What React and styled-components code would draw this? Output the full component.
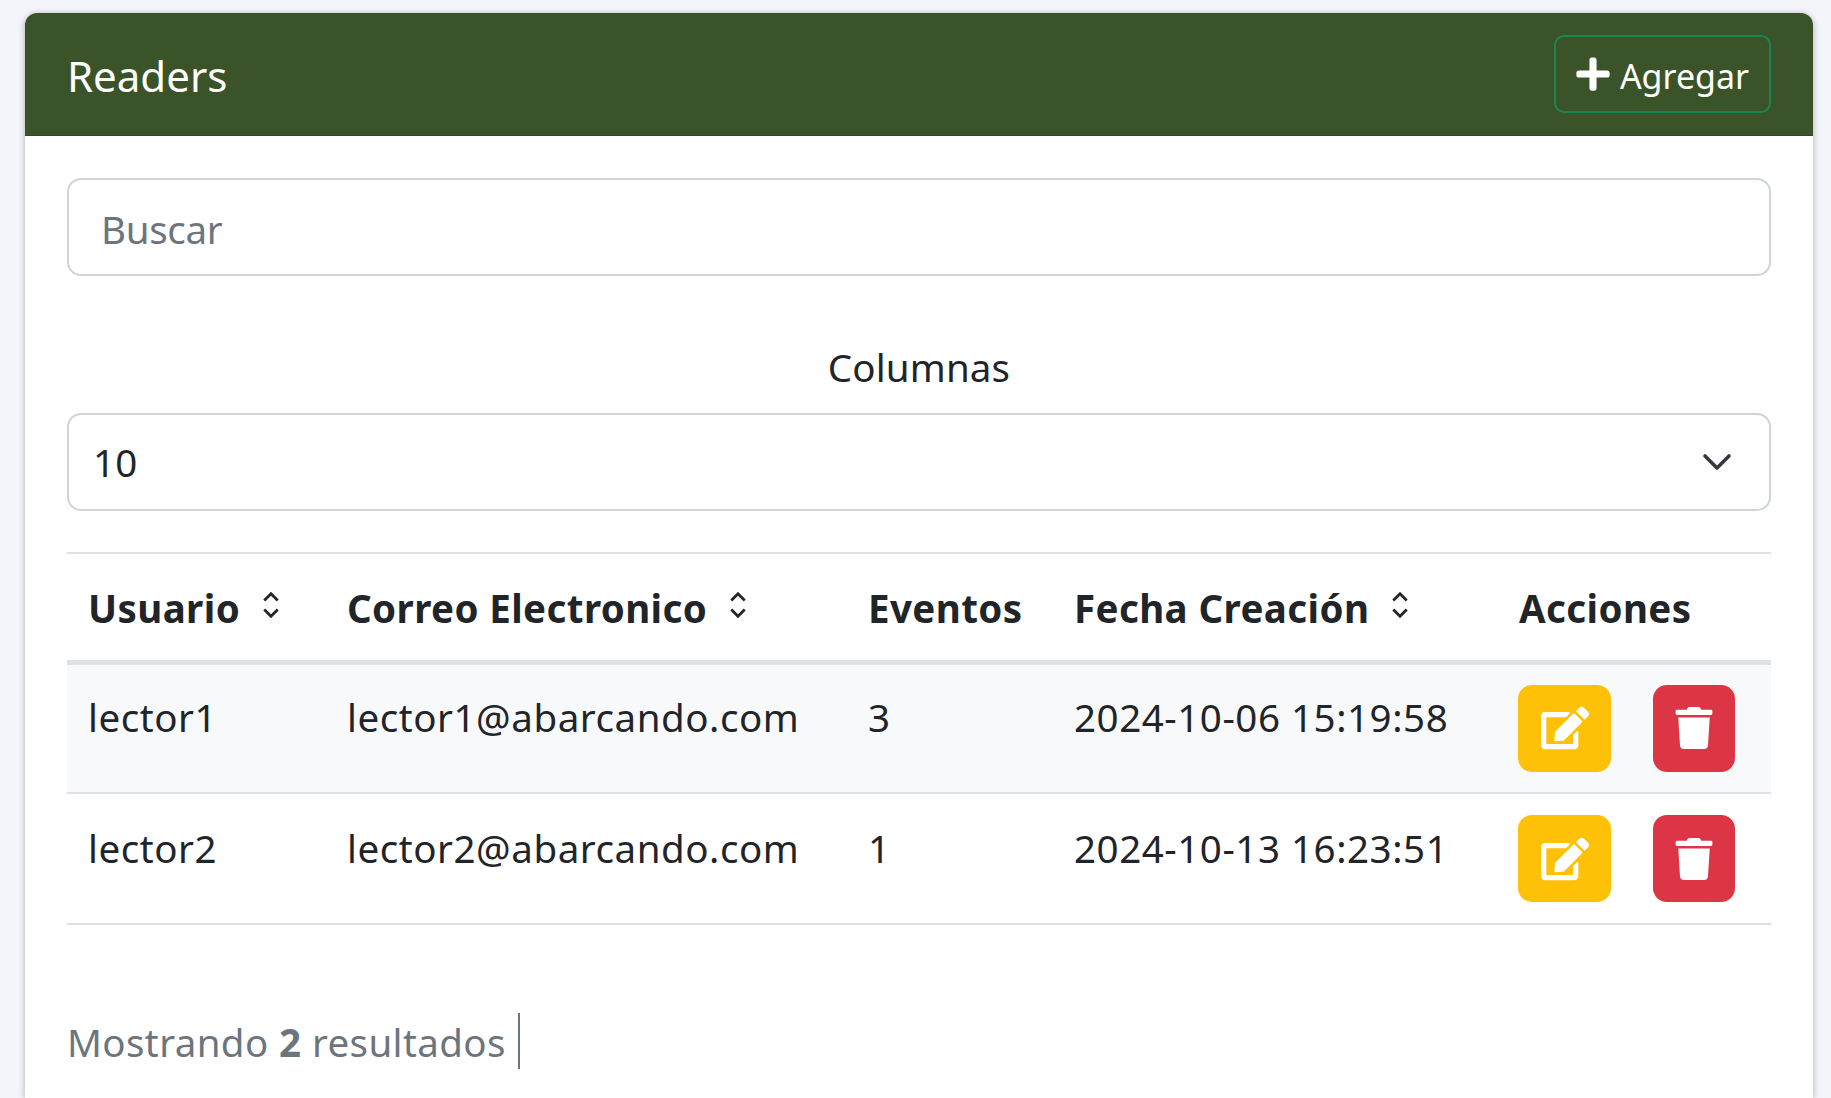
import React from "react";
import styled, { createGlobalStyle } from "styled-components";
import { FaEdit, FaPlus, FaTrash } from "react-icons/fa";

const GlobalStyle = createGlobalStyle`
  html, body {
    margin: 0;
    height: 1098px;
    overflow: hidden;
    background: #f3f5fa;
    font-family: "Noto Sans", "Open Sans", sans-serif;
    color: #212529;
  }
`;

const rows = [
  { user: "lector1", mail: "lector1@abarcando.com", events: 3, date: "2024-10-06 15:19:58", striped: true },
  { user: "lector2", mail: "lector2@abarcando.com", events: 1, date: "2024-10-13 16:23:51" },
];

const SortIcon = () => (
  <SortSvg viewBox="0 0 16 26" fill="none" stroke="#212529" strokeWidth="2.4">
    <path d="M2 9 L8 3 L14 9" />
    <path d="M2 17 L8 23 L14 17" />
  </SortSvg>
);

const ChevronIcon = () => (
  <svg width="30" height="18" viewBox="0 0 30 18" fill="none" stroke="#343a40" strokeWidth="3.6" strokeLinecap="round" strokeLinejoin="round">
    <path d="M3 3l12 12L27 3" />
  </svg>
);

export default function App() {
  return (
    <>
      <GlobalStyle />
      <Page>
        <Card>
          <CardHeader>
            <Title>Readers</Title>
            <AddButton>
              <FaPlus size={38} />
              <ButtonLabel>Agregar</ButtonLabel>
            </AddButton>
          </CardHeader>
          <CardBody>
            <SearchBox>Buscar</SearchBox>
            <ColumnsLabel>Columnas</ColumnsLabel>
            <SelectBox>
              <span>10</span>
              <ChevronIcon />
            </SelectBox>
            <Table>
              <colgroup>
                <col style={{ width: 259 }} />
                <col style={{ width: 521 }} />
                <col style={{ width: 206 }} />
                <col style={{ width: 445 }} />
                <col />
              </colgroup>
              <thead>
                <tr>
                  <Th>Usuario<SortIcon /></Th>
                  <Th>Correo Electronico<SortIcon /></Th>
                  <Th>Eventos</Th>
                  <Th>Fecha Creación<SortIcon /></Th>
                  <Th>Acciones</Th>
                </tr>
              </thead>
              <tbody>
                {rows.map((r) => (
                  <Row key={r.user} $striped={r.striped}>
                    <Td>{r.user}</Td>
                    <Td>{r.mail}</Td>
                    <Td>{r.events}</Td>
                    <Td>{r.date}</Td>
                    <ActionsCell>
                      <Actions>
                        <EditButton><FaEdit size={48} /></EditButton>
                        <DeleteButton><FaTrash size={42} /></DeleteButton>
                      </Actions>
                    </ActionsCell>
                  </Row>
                ))}
              </tbody>
            </Table>
            <Footer>
              <FooterText>Mostrando <b>2</b> resultados</FooterText>
            </Footer>
          </CardBody>
        </Card>
      </Page>
    </>
  );
}

const Page = styled.div`
  padding: 13px 18px 0 25px;
`;

const Card = styled.section`
  background: #fff;
  border-radius: 12px 12px 0 0;
  box-shadow: 0 1px 6px rgba(0, 0, 0, 0.3);
  height: 1085px;
  overflow: hidden;
`;

const CardHeader = styled.header`
  height: 123px;
  box-sizing: border-box;
  background: #3b5328;
  border-bottom: 1px solid #324820;
  padding: 3px 42px 0;
  display: flex;
  align-items: center;
  justify-content: space-between;
`;

const Title = styled.h1`
  margin: 0;
  font-size: 42px;
  font-weight: 400;
  color: #fff;
`;

const AddButton = styled.button`
  width: 217px;
  height: 78px;
  margin-top: -3px;
  box-sizing: border-box;
  display: flex;
  align-items: center;
  justify-content: center;
  gap: 8px;
  background: transparent;
  border: 2px solid #198754;
  border-radius: 10px;
  color: #fff;
  font: inherit;
  font-size: 34px;
`;

const ButtonLabel = styled.span`
  padding-top: 3px;
  margin-right: 2px;
`;

const CardBody = styled.div`
  padding: 42px 42px 0 42px;
`;

const SearchBox = styled.div`
  height: 98px;
  box-sizing: border-box;
  border: 2px solid #ced4da;
  border-radius: 14px;
  padding: 4px 32px 0;
  display: flex;
  align-items: center;
  font-size: 38.500px;
  letter-spacing: -0.3px;
  color: #6c757d;
`;

const ColumnsLabel = styled.div`
  margin-top: 66px;
  text-align: center;
  font-size: 38.500px;
  letter-spacing: 0.15px;
  line-height: 50px;
`;

const SelectBox = styled.div`
  margin-top: 21px;
  height: 98px;
  box-sizing: border-box;
  border: 2px solid #ced4da;
  border-radius: 14px;
  padding: 0 37px 0 24px;
  display: flex;
  align-items: center;
  justify-content: space-between;
  font-size: 38.500px;
  letter-spacing: 0.15px;
`;

const Table = styled.table`
  margin-top: 41px;
  width: 100%;
  table-layout: fixed;
  border-collapse: collapse;
  border-top: 2px solid #dee2e6;
  font-size: 38.500px;
`;

const Th = styled.th`
  height: 109px;
  box-sizing: border-box;
  padding: 3px 0 0 21px;
  text-align: left;
  font-weight: 700;
  letter-spacing: 0.4px;
  white-space: nowrap;
  border-bottom: 5px solid #dee2e6;
`;

const SortSvg = styled.svg`
  width: 18px;
  height: 30px;
  margin-left: 22px;
  vertical-align: 3px;
`;

const Row = styled.tr`
  background: ${(p) => (p.$striped ? "#f8f9fa" : "#fff")};
`;

const Td = styled.td`
  height: 131px;
  box-sizing: border-box;
  padding: 0 0 22px 21px;
  letter-spacing: 0.55px;
  white-space: nowrap;
  border-bottom: 2px solid #dee2e6;
`;

const ActionsCell = styled(Td)`
  padding: 0 0 0 20px;
`;

const Actions = styled.div`
  display: flex;
  gap: 42px;
`;

const IconButton = styled.button`
  height: 87px;
  border: none;
  border-radius: 14px;
  display: flex;
  align-items: center;
  justify-content: center;
  padding: 0;
  color: #fff;
`;

const EditButton = styled(IconButton)`
  width: 93px;
  background: #ffc107;
`;

const DeleteButton = styled(IconButton)`
  width: 82px;
  background: #dc3545;
`;

const Footer = styled.div`
  margin-top: 88px;
  display: flex;
`;

const FooterText = styled.div`
  font-size: 38.500px;
  letter-spacing: 0.4px;
  line-height: 54px;
  padding-top: 2px;
  color: #6c757d;
  padding-right: 12px;
  border-right: 2px solid #6c757d;
`;
